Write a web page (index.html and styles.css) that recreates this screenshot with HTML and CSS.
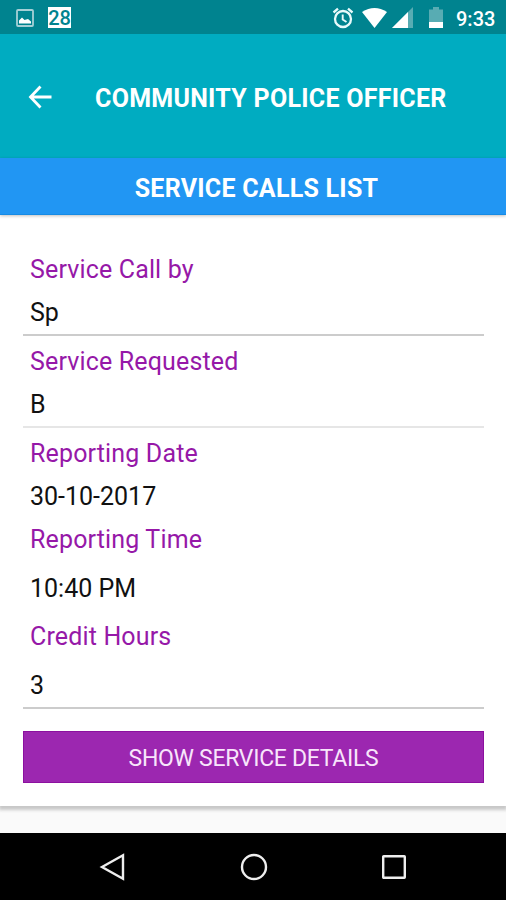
FILE: index.html
```html
<!DOCTYPE html>
<html lang="en">
  <head>
    <meta charset="UTF-8" />
    <meta name="viewport" content="width=device-width, initial-scale=1.0" />
    <title>Community Police Officer</title>
    <link rel="stylesheet" href="styles.css">
  </head>
  <body>
    <div class="status-bar">
      <svg class="picture" width="18" height="18" viewBox="0 0 18 18">
        <rect x="1" y="1" width="16" height="16" rx="1" fill="none" stroke="#a5d0d6" stroke-width="1.8" />
        <path d="M3 14.500V11.500L6 8.500L8.500 11L12 10L15 12.500V14.500Z" fill="#fff" />
      </svg>
      <span class="calendar">28</span>
      <svg class="alarm" width="22" height="22" viewBox="0 0 22 22" fill="none" stroke="#e8fafb" stroke-width="2.300">
        <circle cx="11" cy="12" r="8" />
        <path d="M1.500 5.500L6 1.700M20.500 5.500L16 1.700" />
        <path d="M10.700 7.500V12.500L14.500 15" stroke-width="1.900" />
      </svg>
      <svg class="wifi" width="25" height="20" viewBox="0 0 25 20">
        <path d="M0 4Q12.500-4 25 4L12.500 20Z" fill="#fff" />
      </svg>
      <svg class="signal" width="22" height="21" viewBox="0 0 22 21">
        <path d="M0 21L21 0V21Z" fill="#58acb3" />
        <path d="M0 21L16 5V21Z" fill="#fff" />
      </svg>
      <svg class="battery" width="14" height="21" viewBox="0 0 14 21">
        <path d="M0 2.500H4V0H10V2.500H14V21H0Z" fill="#58acb3" />
        <path d="M0 15H14V21H0Z" fill="#fff" />
      </svg>
      <span class="clock">9:33</span>
    </div>

    <header class="toolbar">
      <a href="#" class="back">
        <svg width="24" height="24" viewBox="0 0 24 24" fill="none" stroke="#fff" stroke-width="2.800">
          <path d="M12.500 1.500L2.500 12L12.500 22.500M2 12H23.500" />
        </svg>
      </a>
      <h1>COMMUNITY POLICE OFFICER</h1>
    </header>

    <h2>SERVICE CALLS LIST</h2>

    <div class="card">
      <dl class="field">
        <dt>Service Call by</dt>
        <dd>Sp</dd>
      </dl>
      <dl class="field light">
        <dt>Service Requested</dt>
        <dd>B</dd>
      </dl>
      <dl class="field report">
        <dt>Reporting Date</dt>
        <dd>30-10-2017</dd>
        <dt>Reporting Time</dt>
        <dd class="spaced">10:40 PM</dd>
        <dt class="spaced">Credit Hours</dt>
        <dd class="spaced">3</dd>
      </dl>
      <button class="details">SHOW SERVICE DETAILS</button>
    </div>

    <nav class="nav-bar">
      <svg width="28" height="28" viewBox="0 0 28 28">
        <path d="M3 14L24 2.300V25.700Z" />
      </svg>
      <svg width="28" height="28" viewBox="0 0 28 28">
        <circle cx="14" cy="14" r="12" />
      </svg>
      <svg width="28" height="28" viewBox="0 0 28 28">
        <rect x="3.200" y="3.200" width="21.600" height="21.600" rx="0.500" />
      </svg>
    </nav>
  </body>
</html>
```

FILE: styles.css
```css
* {
  margin: 0;
  padding: 0;
  box-sizing: border-box;
}

body {
  display: flex;
  flex-direction: column;
  width: 506px;
  height: 900px;
  overflow: hidden;
  background-color: #fafafa;
  font-family: Roboto, "Liberation Sans", sans-serif;
}

svg {
  display: block;
  flex: none;
}

/* Status bar */
.status-bar {
  display: flex;
  align-items: center;
  height: 34px;
  padding: 1px 11px 0 16px;
  background-color: #00838f;
  color: #fff;
}

.calendar {
  width: 23px;
  height: 21px;
  margin-left: 14px;
  background-color: #fff;
  color: #00838f;
  font-size: 20px;
  font-weight: 500;
  line-height: 22px;
  text-align: center;
}

.alarm {
  margin-left: auto;
}

.wifi {
  margin-left: 8px;
}

.signal {
  margin-left: 5px;
}

.battery {
  margin-left: 15px;
}

.clock {
  width: 39px;
  margin-left: 13px;
  padding-top: 2px;
  font-size: 20px;
  font-weight: 500;
  white-space: nowrap;
}

/* Toolbar */
.toolbar {
  display: flex;
  align-items: center;
  height: 124px;
  padding: 2px 0 0 28px;
  background-color: #00acc1;
}

.toolbar h1 {
  margin-left: 43px;
  padding-top: 2px;
  color: #fff;
  font-size: 25px;
  font-weight: 700;
  letter-spacing: 0.27px;
  white-space: nowrap;
}

h2 {
  position: relative;
  height: 57px;
  padding-left: 7px;
  background-color: #2196f3;
  border-bottom: 1px solid #168be5;
  box-shadow: 0 1px 3px rgba(0, 0, 0, 0.25);
  color: #fff;
  font-size: 25px;
  font-weight: 700;
  letter-spacing: 0.25px;
  line-height: 62px;
  text-align: center;
}

/* Card */
.card {
  height: 591px;
  padding: 33px 22px 0 23px;
  background-color: #fff;
  box-shadow: 0 3px 3px 1px #c8c8c8;
}

.field {
  height: 88px;
  padding-left: 7px;
  border-bottom: 2px solid #ccc;
  font-size: 25px;
  line-height: 43px;
}

.field + .field {
  height: 92px;
  padding-top: 4px;
}

.field.light {
  border-color: #e6e6e6;
}

.field.report {
  height: 281px;
}

.field dt {
  color: #9618a8;
  letter-spacing: 0.15px;
}

.field dd {
  color: #111;
}

.field .spaced {
  margin-top: 5.5px;
}

.details {
  display: block;
  width: 461px;
  height: 52px;
  margin-top: 22px;
  padding-top: 2px;
  background-color: #9c27b0;
  border: 1px solid #8c109f;
  color: #f8e5fb;
  font-family: inherit;
  font-size: 23px;
  letter-spacing: -0.3px;
}

/* Navigation bar */
.nav-bar {
  display: flex;
  align-items: center;
  justify-content: space-between;
  height: 67px;
  margin-top: auto;
  padding: 0 98px 0 99px;
  background-color: #000;
}

.nav-bar svg {
  fill: none;
  stroke: #eee;
  stroke-width: 2.4;
}
```
